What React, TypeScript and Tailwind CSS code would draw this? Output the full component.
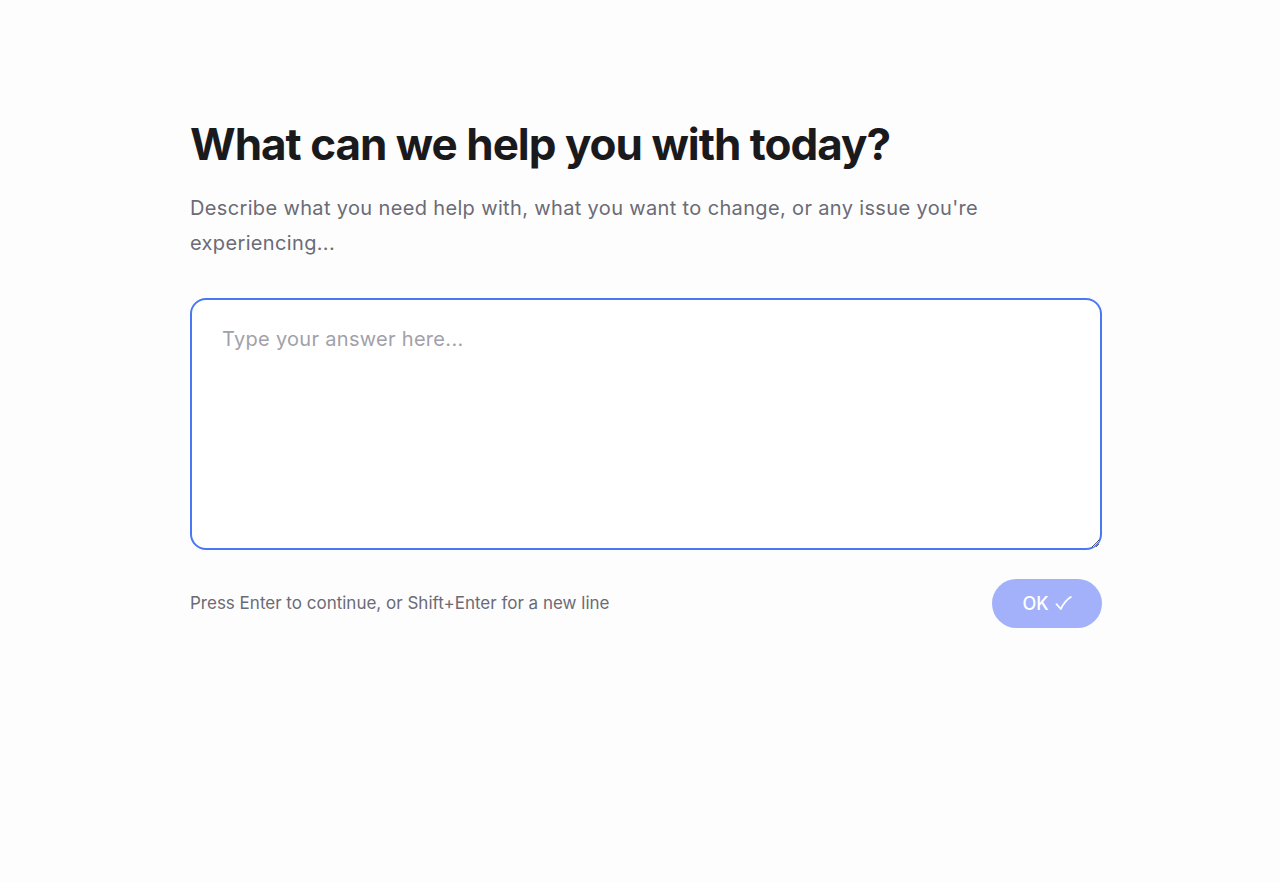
import React from "react";

const App = () => {
  return (
    <div className="min-h-[882px] w-full bg-[#fdfdfd] font-['Inter',sans-serif]">
      <div className="pl-[190px] pt-[118px]">
        <div className="w-[912px]">
          <h1 className="text-[44px] font-bold leading-[52px] tracking-[-1px] text-[#1a1a1d]">
            What can we help you with today?
          </h1>
          <p className="mt-[21px] max-w-[820px] text-[20px] leading-[35px] tracking-[0.35px] text-[#6b6b76]">
            Describe what you need help with, what you want to change, or any issue you're experiencing...
          </p>
          <textarea
            autoFocus
            placeholder="Type your answer here..."
            className="mt-[37px] block h-[252px] w-full resize-y rounded-[16px] border-2 border-[#4a78f5] bg-white px-[30px] py-[24px] text-[20px] leading-[30px] tracking-[0.3px] text-[#1a1a1d] outline-none placeholder:text-[#a1a1aa]"
          />
          <div className="mt-[29px] flex items-center justify-between">
            <span className="text-[17px] text-[#6b6b76]">
              Press Enter to continue, or Shift+Enter for a new line
            </span>
            <button className="flex h-[49px] w-[110px] items-center justify-center gap-[6px] rounded-full bg-[#a3b1fb] text-[18px] font-medium text-white">
              OK
              <svg width="17" height="15" viewBox="0 0 17 15" fill="none">
                <path
                  d="M1.5 8.2 L5.8 13 C8.5 7.5 11.5 3.6 15.8 1"
                  stroke="white"
                  strokeWidth="1.8"
                  strokeLinecap="round"
                  strokeLinejoin="round"
                />
              </svg>
            </button>
          </div>
        </div>
      </div>
    </div>
  );
};

export default App;
